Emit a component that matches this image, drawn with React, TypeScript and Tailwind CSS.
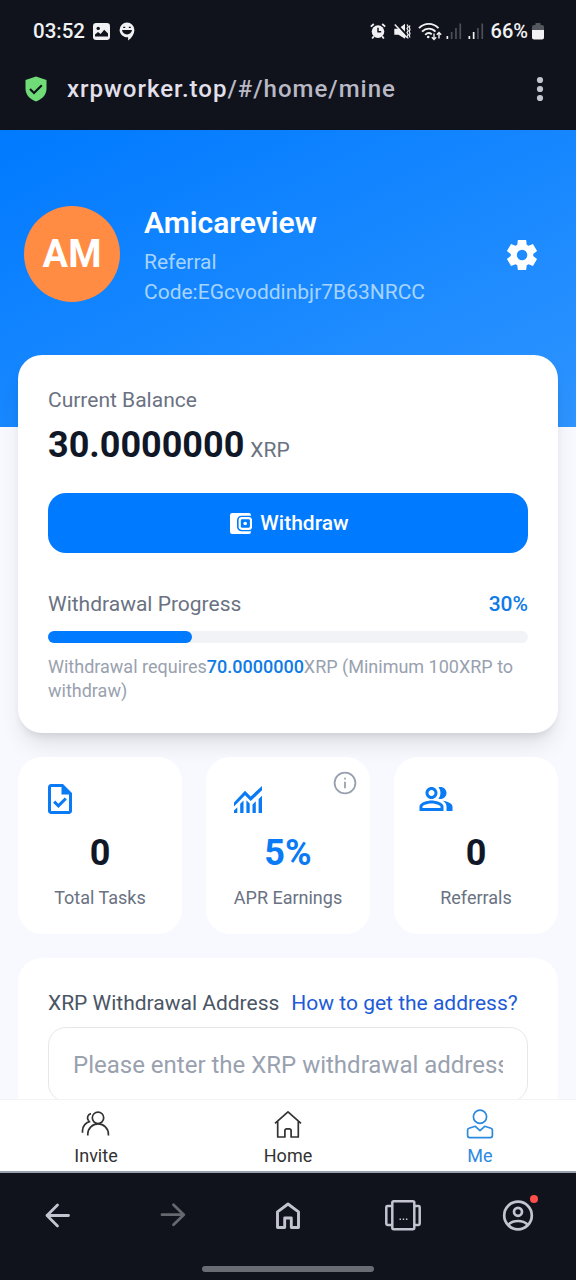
import React, { useState } from 'react';
import { MdOutlinePeopleAlt } from 'react-icons/md';

type IconProps = { className?: string };

function StatusBar() {
  return (
    <div className="flex h-[62px] items-center justify-between pr-8 pl-[33px] text-[#f1f1f3]">
      <div className="flex items-center">
        <span className="text-[20.5px] font-medium leading-none">03:52</span>
        <svg className="ml-2 h-[17px] w-[17px]" viewBox="0 0 17 17">
          <rect width="17" height="17" rx="3.2" fill="currentColor" />
          <circle cx="5.2" cy="5.4" r="1.7" fill="#10131b" />
          <path d="M2 13.5v-2l3-2.6 2.6 2 3.6-4.2L15 10.4v3.1z" fill="#10131b" />
        </svg>
        <svg className="ml-[9px] h-[19px] w-4" viewBox="0 0 16 19">
          <path d="M8 .5a7.4 7.4 0 0 1 7.4 7.4c0 3.6-2.2 7.8-6.3 10.6v-3.3C4.6 15.6.6 12.2.6 7.9A7.4 7.4 0 0 1 8 .5z" fill="currentColor" />
          <path d="M3 8h10c-.4 2.8-2.4 4.4-5 4.4S3.4 10.8 3 8z" fill="#10131b" />
          <path d="M4.2 5.4h2M9.8 5.4h2" stroke="#10131b" strokeWidth="1.2" />
        </svg>
      </div>
      <div className="flex items-center">
        <svg className="h-4 w-4" viewBox="0 0 16 16" fill="none" stroke="currentColor">
          <circle cx="8" cy="8.6" r="6.3" fill="currentColor" stroke="none" />
          <path d="M.8 3.6 3.8 1M15.2 3.6l-3-2.6M3.8 13.2l-1.6 2.3M12.2 13.2l1.6 2.3" strokeWidth="1.8" />
          <path d="M8 4.8v4h3.2" stroke="#10131b" strokeWidth="1.5" />
        </svg>
        <svg className="ml-2 h-[17px] w-[17px]" viewBox="0 0 17 17" fill="none" stroke="currentColor">
          <path d="M.3 5.8h4.2L11 .8v15l-6.500-4H.3z" fill="currentColor" stroke="none" />
          <path d="M2 .8 13 12.2" stroke="#10131b" strokeWidth="2" />
          <path d="M.8 1.600 12.800 14.500" strokeWidth="1.500" />
          <path d="m13 1.500 1.200 2-1.200 2 1.200 2-1.200 2 1.200 2-1.200 2 1.200 2M16 2.500l-.8 2 .8 2-.8 2 .8 2-.8 2 .8 2" strokeWidth="1.200" />
        </svg>
        <svg className="ml-[7px] h-[19px] w-6" viewBox="0 0 24 19" fill="none" stroke="currentColor">
          <path d="M1 6.2c5.5-5.8 14-5.8 19.5 0M4 9.6c4-4 9.600-4 13.500 0M7.200 12.800c2-2 4.600-2 6.600-.5" strokeWidth="1.9" />
          <circle cx="10.2" cy="15" r="1.3" fill="currentColor" stroke="none" />
          <path d="M16 11.500v6M13.800 15.300l2.200 2.200 2.200-2.200M21 16.500v-6M18.800 12.700l2.200-2.200 2.200 2.200" strokeWidth="1.4" />
        </svg>
        <SignalIcon className="ml-1 h-4 w-4" level={1} />
        <SignalIcon className="ml-1.5 h-4 w-4" level={2} />
        <span className="ml-[7px] text-[20px] font-medium leading-none">66%</span>
        <svg className="ml-1 h-[17px] w-3" viewBox="0 0 12 17">
          <path d="M3.5 0h5v2H10a2 2 0 0 1 2 2v3H0V4a2 2 0 0 1 2-2h1.5z" fill="#55575e" />
          <path d="M0 7h12v7.5a2 2 0 0 1-2 2H2a2 2 0 0 1-2-2z" fill="currentColor" />
        </svg>
      </div>
    </div>
  );
}

function SignalIcon({ className, level }: IconProps & { level: number }) {
  return (
    <svg className={className} viewBox="0 0 16 16">
      {[3, 7, 11, 15.5].map((h, i) => (
        <rect key={h} x={0.5 + i * 4.3} y={16 - h} width="1.7" height={h} fill={i < level ? '#f1f1f3' : '#4c4f57'} />
      ))}
    </svg>
  );
}

function AddressBar() {
  return (
    <div className="flex h-[68px] items-center pr-8 pb-[15px] pl-[25px]">
      <svg className="h-[26px] w-[22px]" viewBox="0 0 22 26">
        <path d="M11 .5 21.5 4v8.5c0 6-4.2 10.7-10.5 13C4.7 23.2.5 18.5.5 12.5V4z" fill="#6fdc78" />
        <path d="m5 13 4 4 7.8-7.8" fill="none" stroke="#10131b" strokeWidth="2.2" />
      </svg>
      <p className="ml-5 flex-1 text-[24px] font-medium leading-none tracking-[1px] text-[#e3e0ec]">
        xrpworker.top<span className="text-[#b9b9c6]">/#/home/mine</span>
      </p>
      <svg className="h-[26px] w-2" viewBox="0 0 8 26" fill="#c3c4cf">
        <circle cx="4" cy="4" r="3.1" />
        <circle cx="4" cy="13" r="3.1" />
        <circle cx="4" cy="22" r="3.1" />
      </svg>
    </div>
  );
}

function SettingsIcon({ className }: IconProps) {
  return (
    <svg className={className} viewBox="0 0 24 24" fill="currentColor">
      <path d="m9.25 22-.4-3.2q-.325-.125-.612-.3t-.563-.375L4.7 19.375l-2.75-4.75 2.575-1.95Q4.5 12.5 4.5 12.338v-.675q0-.163.025-.338L1.95 9.375l2.75-4.75 2.975 1.25q.275-.2.575-.375t.6-.3l.4-3.2h5.5l.4 3.2q.325.125.613.3t.562.375l2.975-1.25 2.75 4.75-2.575 1.95q.025.175.025.338v.674q0 .163-.05.338l2.575 1.95-2.75 4.75-2.95-1.25q-.275.2-.575.375t-.6.3l-.4 3.2zm2.8-6.5q1.45 0 2.475-1.025T15.55 12t-1.025-2.475T12.05 8.5q-1.475 0-2.488 1.025T8.55 12t1.013 2.475T12.05 15.5" />
    </svg>
  );
}

function WalletIcon({ className }: IconProps) {
  return (
    <svg className={className} viewBox="0 0 22 21">
      <path d="M2.2 0h16.6A2.2 2.2 0 0 1 21 2.2v.6H11.500a4.500 4.500 0 0 0-4.500 4.500v6.400a4.500 4.500 0 0 0 4.500 4.500H21v.6a2.200 2.200 0 0 1-2.200 2.200H2.200A2.200 2.200 0 0 1 0 18.800V2.200A2.200 2.200 0 0 1 2.200 0z" fill="currentColor" />
      <rect x="9.7" y="5.200" width="11.300" height="10.600" rx="2.200" fill="none" stroke="currentColor" strokeWidth="2.200" />
      <circle cx="15.2" cy="10.5" r="1.8" fill="currentColor" />
    </svg>
  );
}

function TaskIcon({ className }: IconProps) {
  return (
    <svg className={className} viewBox="0 0 24 24" fill="currentColor">
      <path d="m10.95 18.05 5.65-5.65-1.45-1.45-4.225 4.225-2.1-2.1L7.4 14.5zM6 22q-.825 0-1.412-.587T4 20V4q0-.825.588-1.412T6 2h8l6 6v12q0 .825-.587 1.413T18 22zm7-13V4H6v16h12V9z" />
    </svg>
  );
}

function ChartIcon({ className }: IconProps) {
  return (
    <svg className={className} viewBox="0 0 36 36" fill="currentColor">
      <path d="M4 21.5 15 9.8l5.7 5.6L32 5v4.3L20.7 20 15 14.2 4 25.500z" />
      <path d="M4 32v-2.5l3.3-3.3V32zM10.2 32v-9.3l3.3-3.3V32zM16.4 32V19.3l3.3 3.3V32zM22.5 32v-8.5l3.300-3.300V32zM28.600 32V18l3.400-3.300V32z" />
    </svg>
  );
}

function InfoIcon({ className }: IconProps) {
  return (
    <svg className={className} viewBox="0 0 24 24" fill="none" stroke="currentColor" strokeWidth="1.8">
      <circle cx="12" cy="12" r="10.4" />
      <path d="M12 10.800v6.4M12 6.7v1.9" />
    </svg>
  );
}

const stats = [
  { label: 'Total Tasks', value: '0', icon: TaskIcon, valueClass: 'text-gray-900' },
  { label: 'APR Earnings', value: '5%', icon: ChartIcon, valueClass: 'text-[#0a7bf5]', info: true },
  { label: 'Referrals', value: '0', icon: MdOutlinePeopleAlt, valueClass: 'text-gray-900' },
];

function Profile() {
  return (
    <header className="h-[297px] shrink-0 bg-linear-[155deg] from-[#007aff] to-[#2e94ff] px-6 pt-[72px] text-white">
      <div className="flex items-center">
        <div className="mb-px flex h-24 w-24 items-center justify-center rounded-full bg-[#ff8c42] text-[38px] font-bold">
          AM
        </div>
        <div className="ml-6 flex-1">
          <h1 className="text-[30px] font-semibold leading-[42px]">Amicareview</h1>
          <p className="mt-[3px] text-[21px] leading-[30px] text-[#a5d4ff]">
            Referral
            <br />
            Code:EGcvoddinbjr7B63NRCC
          </p>
        </div>
        <button type="button" className="mr-3">
          <SettingsIcon className="h-9 w-9" />
        </button>
      </div>
    </header>
  );
}

function BalanceCard() {
  const progress = 30;

  return (
    <section className="relative -mt-18 rounded-3xl bg-white p-[30px] shadow-[0_15px_22px_-4px_rgba(0,0,0,0.1),0_6px_9px_-4px_rgba(0,0,0,0.1)]">
      <p className="text-[21px] leading-[30px] text-gray-500">Current Balance</p>
      <p className="mt-1.5 text-[36px] font-bold leading-[48px] text-gray-900">
        30.0000000
        <span className="ml-1.5 text-[21px] font-normal leading-none text-gray-500">XRP</span>
      </p>
      <button
        type="button"
        className="mt-6 flex h-[60px] w-full items-center justify-center rounded-[18px] bg-[#007aff] pt-px pl-[3px] text-[21px] font-medium text-white"
      >
        <WalletIcon className="mr-2 h-[21px] w-[22px]" />
        Withdraw
      </button>
      <div className="mt-9 flex justify-between text-[21px] leading-[30px]">
        <span className="text-gray-500">Withdrawal Progress</span>
        <span className="font-medium text-[#0f7be6]">{progress}%</span>
      </div>
      <div className="mt-3 h-3 rounded-full bg-[#f2f3f7]">
        <div className="h-full rounded-full bg-[#007aff]" style={{ width: `${progress}%` }} />
      </div>
      <p className="mt-3 text-[18px] leading-6 text-gray-400">
        Withdrawal requires<span className="font-medium text-[#0f7be6]">70.0000000</span>XRP (Minimum 100XRP to
        withdraw)
      </p>
    </section>
  );
}

function InviteIcon({ className }: IconProps) {
  return (
    <svg className={className} viewBox="0 0 30 30" fill="none" stroke="currentColor" strokeWidth="1.7">
      <circle cx="17" cy="8.8" r="5.7" />
      <path d="M6.800 26.500v-1.300a10.300 10.300 0 0 1 20.600 0v1.300M10 4.600a4.300 4.300 0 0 0-2.300 7.200M9.300 12.400c-4.400.9-7.800 4.600-7.800 9.300v2" />
    </svg>
  );
}

function HomeIcon({ className }: IconProps) {
  return (
    <svg className={className} viewBox="0 0 30 30" fill="none" stroke="currentColor" strokeWidth="1.7" strokeLinejoin="round">
      <path d="M2 14.300 15 2.800l13 11.500M4.700 12v16h7.200v-6.200a2 2 0 0 1 2-2h2.200a2 2 0 0 1 2 2V28h7.200V12" />
    </svg>
  );
}

function MeIcon({ className }: IconProps) {
  return (
    <svg className={className} viewBox="0 0 30 30" fill="none" stroke="currentColor" strokeWidth="1.7" strokeLinejoin="round">
      <circle cx="15" cy="7.7" r="6.6" />
      <path d="M10.300 17.300 4 19.300a2 2 0 0 0-1.400 2v5.300a2 2 0 0 0 2 2h20.800a2 2 0 0 0 2-2v-5.300a2 2 0 0 0-1.400-2l-6.300-2L15 21.700z" />
    </svg>
  );
}

const tabs = [
  { id: 'invite', label: 'Invite', icon: InviteIcon },
  { id: 'home', label: 'Home', icon: HomeIcon },
  { id: 'me', label: 'Me', icon: MeIcon },
];

function TabBar() {
  const [active, setActive] = useState('me');

  return (
    <nav className="grid h-[74px] shrink-0 grid-cols-3 border-t border-b-2 border-t-gray-100 border-b-gray-400 bg-white">
      {tabs.map(({ id, label, icon: Icon }) => (
        <button
          key={id}
          type="button"
          onClick={() => setActive(id)}
          className={`flex flex-col items-center pt-[9px] ${active === id ? 'text-[#2b8ae0]' : 'text-[#323233]'}`}
        >
          <Icon className="h-[30px] w-[30px]" />
          <span className="mt-[5px] text-[18px] leading-6">{label}</span>
        </button>
      ))}
    </nav>
  );
}

function BrowserNav() {
  return (
    <footer className="flex h-[107px] shrink-0 flex-col items-center bg-[#10131b] pt-6 text-[#c3c4cf]">
      <div className="grid w-full grid-cols-5 justify-items-center">
        <svg className="h-9 w-9" viewBox="0 0 36 36" fill="none" stroke="currentColor" strokeWidth="2.8" strokeLinecap="round" strokeLinejoin="round">
          <path d="M28.500 18.500H7M17.500 8 7 18.500 17.500 29" />
        </svg>
        <svg className="h-9 w-9 text-[#666870]" viewBox="0 0 36 36" fill="none" stroke="currentColor" strokeWidth="2.8" strokeLinecap="round" strokeLinejoin="round">
          <path d="M7 17.700h21.500M18.500 7.700l10.300 10-10.300 10" />
        </svg>
        <svg className="h-9 w-9" viewBox="0 0 36 36" fill="none" stroke="currentColor" strokeWidth="2.9" strokeLinejoin="round">
          <path d="M7.500 14.800 18 7l10.500 7.800v15.700h-7.200V21h-6.600v9.500H7.500z" />
        </svg>
        <svg className="h-9 w-[38px]" viewBox="0 0 38 36" fill="none" stroke="currentColor" strokeWidth="2.5">
          <rect x="8.3" y="4.300" width="22" height="28" rx="1.5" />
          <path d="M8 9H3.500a1.200 1.200 0 0 0-1.200 1.200v16.500a1.200 1.200 0 0 0 1.200 1.200H8M30.500 9h4a1.200 1.200 0 0 1 1.200 1.200v16.500a1.200 1.200 0 0 1-1.200 1.200h-4" />
          <path d="M15.500 22.300h1.500M18.700 22.300h1.500M21.900 22.300h1.500" strokeWidth="1.4" />
        </svg>
        <div className="relative">
          <svg className="h-9 w-9" viewBox="0 0 36 36" fill="none" stroke="currentColor" strokeWidth="2.7">
            <circle cx="18" cy="18.5" r="13.8" />
            <circle cx="18" cy="14.8" r="4" />
            <path d="M8.500 27.500c2.500-2.500 5.900-3.500 9.500-3.500s7 1 9.500 3.500" />
          </svg>
          <span className="absolute -top-0.5 -right-0.5 h-2 w-2 rounded-full bg-[#ff4d4a]" />
        </div>
      </div>
      <div className="mt-[33px] h-1.5 w-[172px] rounded-full bg-[#6a6c73]" />
    </footer>
  );
}

export default function App() {
  return (
    <div className="flex h-[1280px] w-[576px] flex-col overflow-hidden bg-[#f7f9fe] font-[Roboto,sans-serif]">
      <div className="h-[130px] shrink-0 bg-[#10131b]">
        <StatusBar />
        <AddressBar />
      </div>

      <main className="flex min-h-0 flex-1 flex-col overflow-hidden">
        <Profile />
        <div className="px-[18px]">
          <BalanceCard />

          <section className="relative mt-6 grid grid-cols-3 gap-6">
            {stats.map(({ label, value, icon: Icon, valueClass, info }) => (
              <div key={label} className="relative rounded-3xl bg-white p-6">
                <Icon className="h-9 w-9 text-[#0a7bf5]" />
                {info && <InfoIcon className="absolute top-3.5 right-[13px] h-6 w-6 text-gray-400" />}
                <p className={`mt-3 text-center text-[36px] font-bold leading-[48px] ${valueClass}`}>{value}</p>
                <p className="-mx-4 mt-[9px] text-center text-[18px] leading-6 text-gray-500">{label}</p>
              </div>
            ))}
          </section>

          <section className="mt-6 rounded-3xl bg-white p-[30px]">
            <div className="flex gap-3 whitespace-nowrap text-[21px] leading-[30px]">
              <label htmlFor="address" className="text-gray-600">
                XRP Withdrawal Address
              </label>
              <a className="text-[#1d5bd8]">How to get the address?</a>
            </div>
            <input
              id="address"
              type="text"
              placeholder="Please enter the XRP withdrawal address"
              className="mt-[9px] h-[75px] w-full rounded-[18px] border border-gray-200 px-6 text-[24px] placeholder:text-gray-400"
            />
          </section>
        </div>
      </main>

      <TabBar />
      <BrowserNav />
    </div>
  );
}
